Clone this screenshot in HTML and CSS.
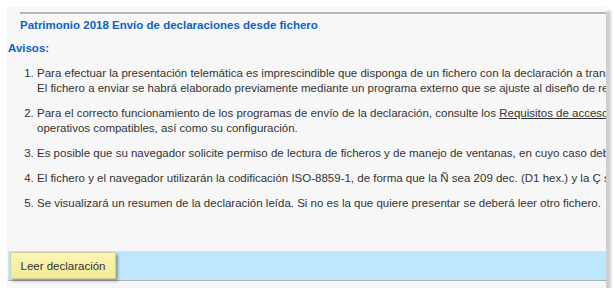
FILE: index.html
```html
<!DOCTYPE html>
<html lang="es">
<head>
  <meta charset="UTF-8">
  <title>Patrimonio 2018 Envío de declaraciones desde fichero</title>
  <link rel="stylesheet" href="styles.css">
</head>
<body>

  <div class="panel">
    <div class="head">Patrimonio 2018 Envío de declaraciones desde fichero</div>

    <div class="avisos">Avisos:</div>
    <ol class="notes">
      <li>Para efectuar la presentación telemática es imprescindible que disponga de un fichero con la declaración a transmitir.<br>El fichero a enviar se habrá elaborado previamente mediante un programa externo que se ajuste al diseño de registro publicado.</li>
      <li>Para el correcto funcionamiento de los programas de envío de la declaración, consulte los <a href="#">Requisitos de acceso</a> y sistemas<br>operativos compatibles, así como su configuración.</li>
      <li>Es posible que su navegador solicite permiso de lectura de ficheros y de manejo de ventanas, en cuyo caso deberá concederlo.</li>
      <li>El fichero y el navegador utilizarán la codificación ISO-8859-1, de forma que la Ñ sea 209 dec. (D1 hex.) y la Ç sea 199 dec. (C7 hex.)</li>
      <li>Se visualizará un resumen de la declaración leída. Si no es la que quiere presentar se deberá leer otro fichero.</li>
    </ol>

    <div class="bar">
      <button class="btn" type="button">Leer declaración</button>
    </div>
  </div>

</body>
</html>
```

FILE: styles.css
```css
body {
  margin: 0;
  padding: 7px 0 0 7px;
  background: #ffffff;
  font-family: "Liberation Sans", Arial, sans-serif;
  font-size: 11.5px;
  color: #333333;
}
.panel {
  width: 599px;
  height: 281px;
  background: #f7f7f7;
  box-shadow: 5px 4px 2px #cfcfcf;
  overflow: hidden;
  display: flex;
  flex-direction: column;
  box-sizing: border-box;
  padding-bottom: 7px;
}
.head {
  margin: 5px 0 0 13px;
  border-top: 2px solid #b8b8b8;
  padding-top: 4px;
  line-height: 15px;
  font-weight: bold;
  color: #0b63c6;
}
.avisos {
  margin: 8px 0 0 1px;
  line-height: 15px;
  font-weight: bold;
  color: #0b63c6;
}
.notes {
  margin: 10px 0 0 0;
  padding-left: 30px;
  white-space: nowrap;
  line-height: 15px;
}
.notes li { margin-bottom: 10px; }
.notes a { color: #333333; }
.bar {
  margin: auto 0 0 1px;
  height: 29px;
  background: #bfe7fc;
  border-bottom: 1px solid #a9b4ba;
  display: flex;
  align-items: center;
}
.btn {
  margin-left: 2px;
  height: 27px;
  width: 106px;
  padding: 0;
  font-family: inherit;
  font-size: 11.5px;
  color: #333333;
  background: linear-gradient(#faf6b4, #f1ea98);
  border: 1px solid #d3cf9a;
  border-radius: 2px;
  box-shadow: 2px 2px 3px rgba(0,0,0,0.35);
}
```
